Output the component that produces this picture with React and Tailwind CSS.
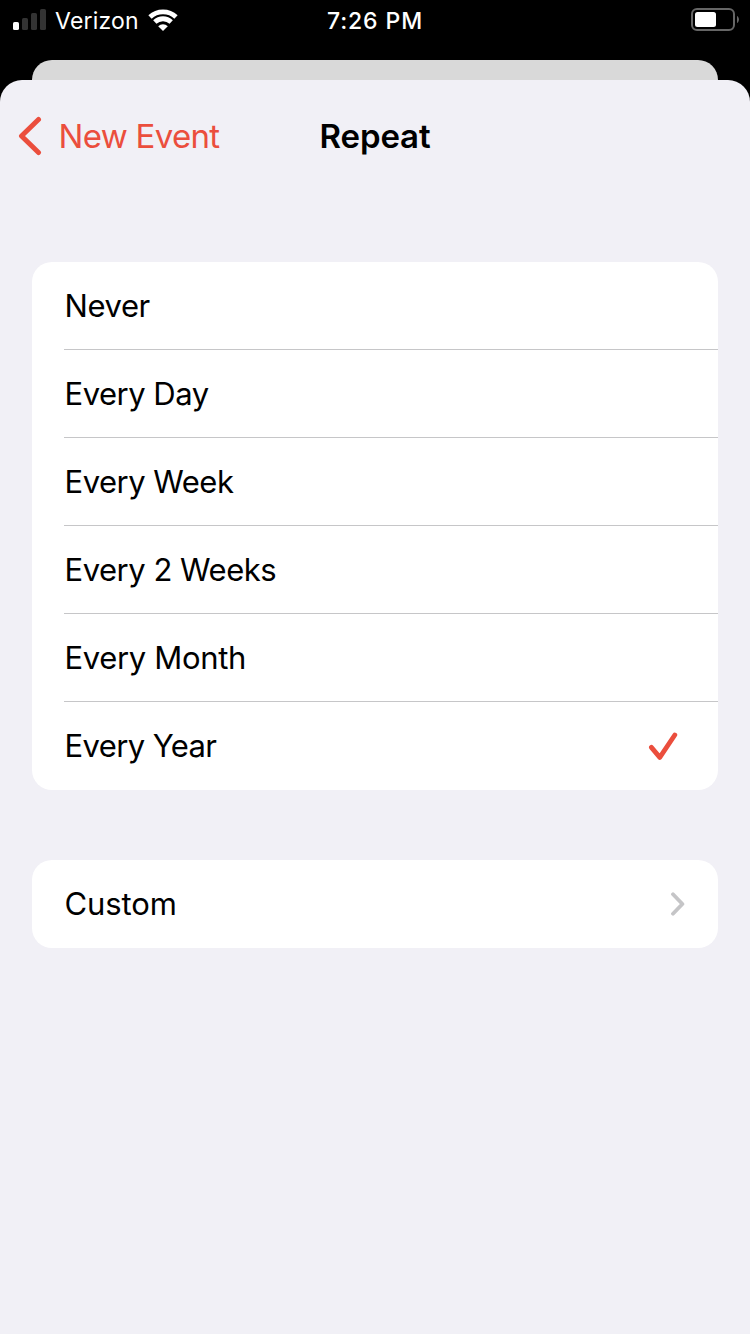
const OPTIONS = [
  { label: "Never", tracking: "tracking-[-0.4px]" },
  { label: "Every Day", tracking: "tracking-[-0.5px]" },
  { label: "Every Week", tracking: "tracking-[-0.5px]" },
  { label: "Every 2 Weeks", tracking: "tracking-[-0.48px]" },
  { label: "Every Month", tracking: "tracking-[-0.34px]" },
  { label: "Every Year", tracking: "tracking-[-0.6px]" },
];

function StatusBar() {
  return (
    <div className="grid h-[60px] shrink-0 grid-cols-3 items-start bg-black text-[23px] leading-[42px] text-white">
      <div className="flex h-[42px] items-center pl-[13px]">
        <svg width="33" height="21" viewBox="0 0 33 21" className="-mt-[3px] shrink-0">
          <rect x="0" y="13" width="6" height="8" rx="1.6" fill="#fff" />
          <rect x="9" y="9" width="6" height="12" rx="1.6" fill="#333" />
          <rect x="18" y="4" width="6" height="17" rx="1.6" fill="#333" />
          <rect x="27" y="0" width="6" height="21" rx="1.6" fill="#333" />
        </svg>
        <span className="ml-[9px] tracking-[0.2px]">Verizon</span>
        <svg width="30" height="22" viewBox="0 0 30 22" className="ml-[9px] -mt-[2px] shrink-0" fill="none" stroke="#fff" strokeWidth="4.8">
          <path d="M2 8 A19 19 0 0 1 28 8" />
          <path d="M6.8 13 A12 12 0 0 1 23.2 13" />
          <path d="M15 22 L10.2 17.2 A7 7 0 0 1 19.8 17.2 Z" fill="#fff" stroke="none" />
        </svg>
      </div>
      <div className="text-center font-medium tracking-[0.9px]">7:26 PM</div>
      <div className="flex h-[42px] items-center justify-end pr-[11px]">
        <svg width="48" height="24" viewBox="0 0 48 24" className="-mt-[2px]">
          <rect x="1" y="1" width="42" height="21" rx="5" fill="none" stroke="#666" strokeWidth="2" />
          <rect x="4" y="4" width="21" height="15" rx="2.5" fill="#fff" />
          <path d="M46 8 C48.6 9.2 48.6 13.8 46 15 Z" fill="#666" />
        </svg>
      </div>
    </div>
  );
}

function NavBar() {
  return (
    <header className="grid h-[112px] grid-cols-3 items-center text-[33px] leading-10">
      <button className="flex items-center pl-[18px] text-[#eb4e3d]">
        <svg width="24" height="40" viewBox="0 0 24 40" fill="none" stroke="#eb4e3d" strokeWidth="5" strokeLinecap="round" strokeLinejoin="round">
          <path d="M20.5 3.5 L3.5 20 L20.5 36.5" />
        </svg>
        <span className="ml-[16.5px] whitespace-nowrap tracking-[-0.68px]">New Event</span>
      </button>
      <h1 className="text-center font-semibold tracking-[-0.1px] text-black">Repeat</h1>
    </header>
  );
}

export default function App() {
  return (
    <div className="flex h-[1334px] w-[750px] flex-col overflow-hidden bg-black font-['Inter','Liberation_Sans',sans-serif]">
      <StatusBar />
      <div className="mx-8 h-10 shrink-0 rounded-t-[20px] bg-[#d9d9d9]" />
      <main className="relative -mt-5 flex-1 rounded-t-[22px] bg-[#f1f0f6]">
        <NavBar />
        <ul className="mx-8 mt-[70px] overflow-hidden rounded-[20px] bg-white pl-8 text-[31px] text-black">
          {OPTIONS.map(({ label, tracking }, i) => {
            const last = i === OPTIONS.length - 1;
            return (
              <li key={label} className={`flex h-[88px] items-center justify-between ${last ? "" : "border-b border-[#c6c6c8] pt-px"}`}>
                <span className={`pl-[0.5px] ${tracking}`}>{label}</span>
                {last && (
                  <svg width="30" height="30" viewBox="0 0 30 30" className="mr-10 mt-px" fill="none" stroke="#eb4e3d" strokeWidth="4.8" strokeLinecap="round" strokeLinejoin="round">
                    <path d="M3.4 15.4 L11.8 25.4 L26.8 3" />
                  </svg>
                )}
              </li>
            );
          })}
        </ul>
        <div className="mx-8 mt-[70px] flex h-[88px] items-center justify-between rounded-[20px] bg-white pl-8 pr-[33px] text-[31px] text-black">
          <span className="pl-[0.5px] tracking-[-0.1px]">Custom</span>
          <svg width="14" height="24" viewBox="0 0 14 24" fill="none" stroke="#c5c5c7" strokeWidth="3.8" strokeLinecap="round" strokeLinejoin="round">
            <path d="M2 2.3 L11.4 12 L2 21.7" />
          </svg>
        </div>
      </main>
    </div>
  );
}
